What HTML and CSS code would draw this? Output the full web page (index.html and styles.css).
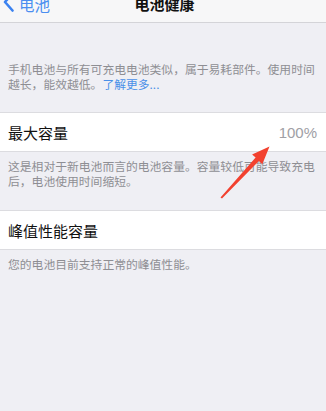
FILE: index.html
```html
<!DOCTYPE html>
<html lang="zh-CN">
<head>
<meta charset="utf-8">
<title>电池健康</title>
<link rel="stylesheet" href="styles.css">
</head>
<body>
<header class="nav">
  <div class="back">
    <svg class="chev" width="12" height="20" viewBox="0 0 12 20"><path d="M9.5 1.5 L2 10 L9.5 18.5" fill="none" stroke="#3b82f0" stroke-width="2.6" stroke-linecap="round" stroke-linejoin="round"/></svg>
    <span class="back-label">电池</span>
  </div>
  <div class="title">电池健康</div>
  <div class="spacer"></div>
</header>

<main class="content">
  <p class="desc">手机电池与所有可充电电池类似，属于易耗部件。使用时间越长，能效越低。<span class="link">了解更多...</span></p>

  <section class="group">
    <div class="cell">
      <span class="cell-label">最大容量</span>
      <span class="cell-value">100%</span>
    </div>
    <p class="footer">这是相对于新电池而言的电池容量。容量较低可能导致充电后，电池使用时间缩短。</p>
  </section>

  <section class="group">
    <div class="cell">
      <span class="cell-label">峰值性能容量</span>
    </div>
    <p class="footer">您的电池目前支持正常的峰值性能。</p>
  </section>
</main>

<svg class="annot" width="326" height="411" viewBox="0 0 326 411">
  <polygon points="220.5,197.5 255.6,157.6 252.1,154.4 269.5,146.5 262.3,164.2 258.9,161 222,198.5" fill="#f2412f"/>
</svg>
</body>
</html>
```
FILE: styles.css
```css
html, body {
  margin: 0;
  padding: 0;
}
body {
  width: 326px;
  height: 411px;
  overflow: hidden;
  background: #efeff4;
  font-family: "Noto Sans CJK SC", "Noto Sans", sans-serif;
  position: relative;
}
.nav {
  height: 23px;
  background: #f7f7f8;
  border-bottom: 1px solid #d4d4d8;
  box-sizing: border-box;
  display: flex;
  align-items: flex-end;
  padding-bottom: 8px;
  overflow: hidden;
}
.back {
  width: 110px;
  display: flex;
  align-items: center;
  padding-left: 3px;
  gap: 4px;
  height: 20px;
}
.chev {
  display: block;
  margin-top: -5px;
}
.back-label {
  color: #4a8ef0;
  font-size: 15.5px;
  line-height: 20px;
}
.title {
  flex: 1;
  text-align: center;
  font-size: 15px;
  font-weight: 600;
  color: #111;
  line-height: 20px;
  margin-left: -14px;
}
.spacer {
  width: 96px;
}
.content {
  display: flex;
  flex-direction: column;
}
.desc {
  margin: 38px 0 0;
  padding: 0 8px;
  font-size: 11.8px;
  line-height: 15px;
  color: #8e8e93;
}
.link {
  color: #4a90e8;
}
.group {
  margin-top: 21px;
}
.group + .group {
  margin-top: 22px;
}
.cell {
  background: #fff;
  border-top: 1px solid #dcdce0;
  border-bottom: 1px solid #dcdce0;
  height: 40px;
  box-sizing: border-box;
  display: flex;
  align-items: center;
  justify-content: space-between;
  padding: 0 9px 0 8px;
}
.cell-label {
  font-size: 15px;
  color: #111;
}
.cell-value {
  font-size: 15px;
  color: #a0a0a5;
  font-family: "Liberation Sans", "Noto Sans", sans-serif;
}
.footer {
  margin: 7px 0 0;
  padding: 0 8px;
  font-size: 11.8px;
  line-height: 14.5px;
  color: #8e8e93;
}
.annot {
  position: absolute;
  left: 0;
  top: 0;
  pointer-events: none;
}
```
